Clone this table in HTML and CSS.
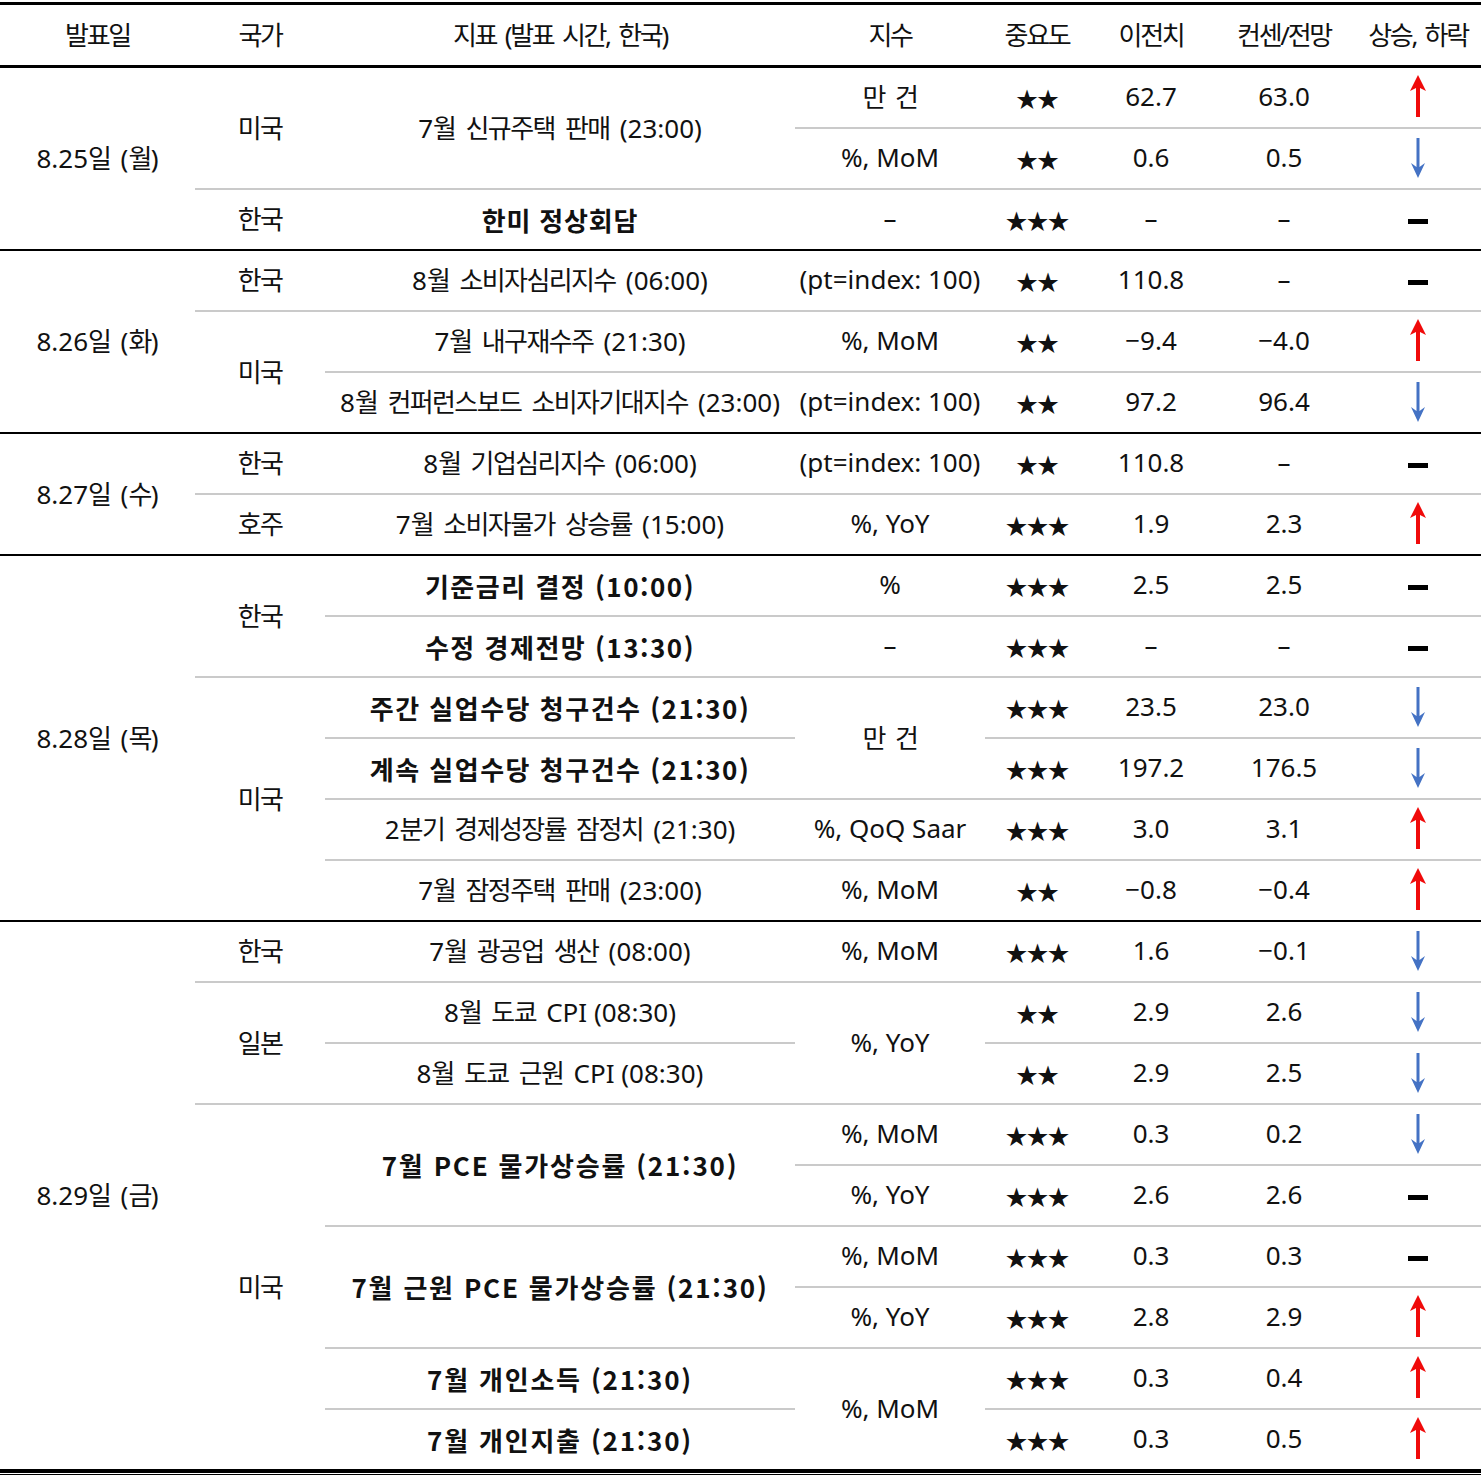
FILE: index.html
```html
<!DOCTYPE html>
<html lang="ko">
<head>
<meta charset="utf-8">
<title>주요 경제지표 발표 일정</title>
<link rel="stylesheet" href="styles.css">
</head>
<body>
<div class="wrap">
<table class="cal">
  <colgroup>
    <col class="c-date"><col class="c-cty"><col class="c-ind"><col class="c-idx"><col class="c-imp"><col class="c-prev"><col class="c-cons"><col class="c-dir">
  </colgroup>
  <thead>
    <tr><th>발표일</th><th>국가</th><th>지표 (발표 시간, 한국)</th><th>지수</th><th>중요도</th><th>이전치</th><th>컨센/전망</th><th>상승, 하락</th></tr>
  </thead>
  <tbody>
    <!-- 8.25 -->
    <tr>
      <td rowspan="3" class="k">8.25<span class="h">일 </span>(<span class="h">월</span>)</td>
      <td rowspan="2" class="h">미국</td>
      <td rowspan="2">7<span class="h">월 신규주택 판매 </span>(23:00)</td>
      <td class="h">만 건</td><td class="star">★★</td><td>62.7</td><td>63.0</td><td><span class="up"></span></td>
    </tr>
    <tr><td>%, MoM</td><td class="star">★★</td><td>0.6</td><td>0.5</td><td><span class="down"></span></td></tr>
    <tr class="end"><td class="h">한국</td><td class="bx">한미 정상회담</td><td>–</td><td class="star">★★★</td><td>–</td><td>–</td><td><span class="flat"></span></td></tr>
    <!-- 8.26 -->
    <tr>
      <td rowspan="3" class="k">8.26<span class="h">일 </span>(<span class="h">화</span>)</td>
      <td class="h">한국</td><td>8<span class="h">월 소비자심리지수 </span>(06:00)</td><td>(pt=index: 100)</td><td class="star">★★</td><td>110.8</td><td>–</td><td><span class="flat"></span></td>
    </tr>
    <tr><td rowspan="2" class="k h">미국</td><td>7<span class="h">월 내구재수주 </span>(21:30)</td><td>%, MoM</td><td class="star">★★</td><td>−9.4</td><td>−4.0</td><td><span class="up"></span></td></tr>
    <tr class="end"><td>8<span class="h">월 컨퍼런스보드 소비자기대지수 </span>(23:00)</td><td>(pt=index: 100)</td><td class="star">★★</td><td>97.2</td><td>96.4</td><td><span class="down"></span></td></tr>
    <!-- 8.27 -->
    <tr>
      <td rowspan="2" class="k">8.27<span class="h">일 </span>(<span class="h">수</span>)</td>
      <td class="h">한국</td><td>8<span class="h">월 기업심리지수 </span>(06:00)</td><td>(pt=index: 100)</td><td class="star">★★</td><td>110.8</td><td>–</td><td><span class="flat"></span></td>
    </tr>
    <tr class="end"><td class="h">호주</td><td>7<span class="h">월 소비자물가 상승률 </span>(15:00)</td><td>%, YoY</td><td class="star">★★★</td><td>1.9</td><td>2.3</td><td><span class="up"></span></td></tr>
    <!-- 8.28 -->
    <tr>
      <td rowspan="6" class="k">8.28<span class="h">일 </span>(<span class="h">목</span>)</td>
      <td rowspan="2" class="h">한국</td><td class="bw">기준금리 결정 (10:00)</td><td>%</td><td class="star">★★★</td><td>2.5</td><td>2.5</td><td><span class="flat"></span></td>
    </tr>
    <tr><td class="bw">수정 경제전망 (13:30)</td><td>–</td><td class="star">★★★</td><td>–</td><td>–</td><td><span class="flat"></span></td></tr>
    <tr><td rowspan="4" class="k h">미국</td><td class="bw">주간 실업수당 청구건수 (21:30)</td><td rowspan="2" class="h">만 건</td><td class="star">★★★</td><td>23.5</td><td>23.0</td><td><span class="down"></span></td></tr>
    <tr><td class="bw">계속 실업수당 청구건수 (21:30)</td><td class="star">★★★</td><td>197.2</td><td>176.5</td><td><span class="down"></span></td></tr>
    <tr><td>2<span class="h">분기 경제성장률 잠정치 </span>(21:30)</td><td>%, QoQ Saar</td><td class="star">★★★</td><td>3.0</td><td>3.1</td><td><span class="up"></span></td></tr>
    <tr class="end"><td>7<span class="h">월 잠정주택 판매 </span>(23:00)</td><td>%, MoM</td><td class="star">★★</td><td>−0.8</td><td>−0.4</td><td><span class="up"></span></td></tr>
    <!-- 8.29 -->
    <tr>
      <td rowspan="9" class="k last">8.29<span class="h">일 </span>(<span class="h">금</span>)</td>
      <td class="h">한국</td><td>7<span class="h">월 광공업 생산 </span>(08:00)</td><td>%, MoM</td><td class="star">★★★</td><td>1.6</td><td>−0.1</td><td><span class="down"></span></td>
    </tr>
    <tr><td rowspan="2" class="h">일본</td><td>8<span class="h">월 도쿄 </span>CPI (08:30)</td><td rowspan="2">%, YoY</td><td class="star">★★</td><td>2.9</td><td>2.6</td><td><span class="down"></span></td></tr>
    <tr><td>8<span class="h">월 도쿄 근원 </span>CPI (08:30)</td><td class="star">★★</td><td>2.9</td><td>2.5</td><td><span class="down"></span></td></tr>
    <tr><td rowspan="6" class="last h">미국</td><td rowspan="2" class="bn">7월 PCE 물가상승률 (21:30)</td><td>%, MoM</td><td class="star">★★★</td><td>0.3</td><td>0.2</td><td><span class="down"></span></td></tr>
    <tr><td>%, YoY</td><td class="star">★★★</td><td>2.6</td><td>2.6</td><td><span class="flat"></span></td></tr>
    <tr><td rowspan="2" class="bn">7월 근원 PCE 물가상승률 (21:30)</td><td>%, MoM</td><td class="star">★★★</td><td>0.3</td><td>0.3</td><td><span class="flat"></span></td></tr>
    <tr><td>%, YoY</td><td class="star">★★★</td><td>2.8</td><td>2.9</td><td><span class="up"></span></td></tr>
    <tr><td class="bn">7월 개인소득 (21:30)</td><td rowspan="2" class="last">%, MoM</td><td class="star">★★★</td><td>0.3</td><td>0.4</td><td><span class="up"></span></td></tr>
    <tr class="endlast"><td class="bn">7월 개인지출 (21:30)</td><td class="star">★★★</td><td>0.3</td><td>0.5</td><td><span class="up"></span></td></tr>
  </tbody>
</table>
<div class="bottom-rule"></div>
</div>
</body>
</html>
```
FILE: styles.css
```css
html, body {
  margin: 0;
  padding: 0;
  background: #fff;
}

.wrap {
  width: 1481px;
  padding-top: 2px;
}

.cal {
  width: 1481px;
  border-collapse: collapse;
  table-layout: fixed;
  font-family: "Noto Sans", "Noto Sans CJK KR", sans-serif;
  font-size: 26px;
  color: #111;
}

.c-date { width: 195px; }
.c-cty { width: 130px; }
.c-ind { width: 470px; }
.c-idx { width: 190px; }
.c-imp { width: 104px; }
.c-prev { width: 124px; }
.c-cons { width: 142px; }
.c-dir { width: 126px; }

.cal th {
  font-weight: normal;
  height: 58px;
  padding: 0 0 2px;
  text-align: center;
  vertical-align: middle;
  border-top: 3px solid #000;
  border-bottom: 3px solid #000;
  white-space: nowrap;
  letter-spacing: -2.3px;
  word-spacing: 4px;
}

.cal td {
  height: 56px;
  padding: 0 0 3px;
  text-align: center;
  vertical-align: middle;
  border-bottom: 2px solid #cacaca;
  white-space: nowrap;
}

.cal .h {
  letter-spacing: -1.6px;
  word-spacing: 5px;
}

.cal td.k,
.cal tr.end td {
  border-bottom-color: #000;
}

.cal td.last,
.cal tr.endlast td {
  border-bottom: 0;
}

.cal td.star {
  font-family: "Noto Sans CJK KR", sans-serif;
  font-size: 22px;
  letter-spacing: -1px;
  padding-bottom: 1px;
  height: 58px;
}

.cal td.bw,
.cal td.bn,
.cal td.bx {
  font-family: "Noto Sans CJK KR", sans-serif;
  font-weight: bold;
  padding-bottom: 1px;
  height: 58px;
}

.cal td.bw {
  letter-spacing: 1.5px;
}

.cal td.bn {
  letter-spacing: 1.8px;
}

.cal td.bx {
  letter-spacing: 0.8px;
}

.up, .down, .flat {
  display: inline-block;
  vertical-align: middle;
}

.up {
  width: 18px;
  height: 42px;
  background: no-repeat center / 18px 42px;
  background-image: url("data:image/svg+xml;utf8,<svg xmlns='http://www.w3.org/2000/svg' viewBox='0 0 18 42'><path d='M9 0 L17 16 L11 13 L11 42 L7 42 L7 13 L1 16 Z' fill='%23f00a0a'/></svg>");
}

.down {
  width: 16px;
  height: 40px;
  background: no-repeat center / 16px 40px;
  background-image: url("data:image/svg+xml;utf8,<svg xmlns='http://www.w3.org/2000/svg' viewBox='0 0 16 40'><path d='M6.5 0 H9.5 V29 L15 25 L8 40 L1 25 L6.5 29 Z' fill='%234472c4'/></svg>");
}

.flat {
  width: 20px;
  height: 5px;
  background: #000;
}

.bottom-rule {
  width: 1481px;
  height: 1px;
  border-top: 4px solid #000;
  border-bottom: 1px solid #000;
}
```
